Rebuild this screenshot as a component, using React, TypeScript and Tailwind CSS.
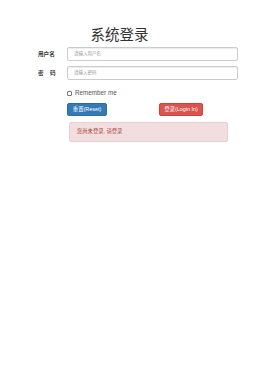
export default function App() {
  const font = { fontFamily: '"Liberation Sans", "Noto Sans CJK SC", sans-serif' };
  return (
    <div className="w-[280px] h-[380px] bg-white text-[#333]" style={font}>
      <div className="pt-[27px]">
        <div className="w-[239px] text-center text-[14.5px] leading-[17px] text-[#333]">系统登录</div>
        <div className="mt-[3px] flex items-center h-[14px]">
          <div className="w-[56px] pl-[38px] text-[5.6px] font-bold leading-[14px]">用户名</div>
          <div className="ml-[11px] w-[171px] h-[14px] border border-[#ccc] rounded-[2px] flex items-center pl-[6px] text-[4.5px] text-[#999] shadow-[inset_0_1px_1px_rgba(0,0,0,0.075)]">
            请输入用户名
          </div>
        </div>
        <div className="mt-[5px] flex items-center h-[14px]">
          <div className="w-[56px] pl-[38px] flex">
            <div className="w-[17.5px] flex justify-between text-[5.6px] font-bold leading-[14px]">
              <span>密</span>
              <span>码</span>
            </div>
          </div>
          <div className="ml-[11px] w-[171px] h-[14px] border border-[#ccc] rounded-[2px] flex items-center pl-[6px] text-[4.5px] text-[#999] shadow-[inset_0_1px_1px_rgba(0,0,0,0.075)]">
            请输入密码
          </div>
        </div>
        <div className="mt-[10px] ml-[67px] flex items-center h-[6px]">
          <span className="w-[5px] h-[5px] border border-[#777] rounded-[1px] bg-white" />
          <span className="ml-[3px] text-[6.3px] leading-[6px] text-[#555]">Remember me</span>
        </div>
        <div className="mt-[7px] ml-[67px] flex">
          <div className="w-[40px] h-[13px] rounded-[2px] bg-[#337ab7] border border-[#2e6da4] text-white text-[5.4px] flex items-center justify-center">
            重置(Reset)
          </div>
          <div className="ml-[52px] w-[44px] h-[13px] rounded-[2px] bg-[#d9534f] border border-[#d43f3a] text-white text-[5.4px] flex items-center justify-center">
            登录(Login In)
          </div>
        </div>
        <div className="mt-[6px] ml-[69px] w-[159px] h-[20px] bg-[#f2dede] border border-[#ebccd1] rounded-[2px] text-[#a94442] text-[5.3px] flex items-center pl-[7px]">
          您尚未登录, 请登录
        </div>
      </div>
    </div>
  );
}
